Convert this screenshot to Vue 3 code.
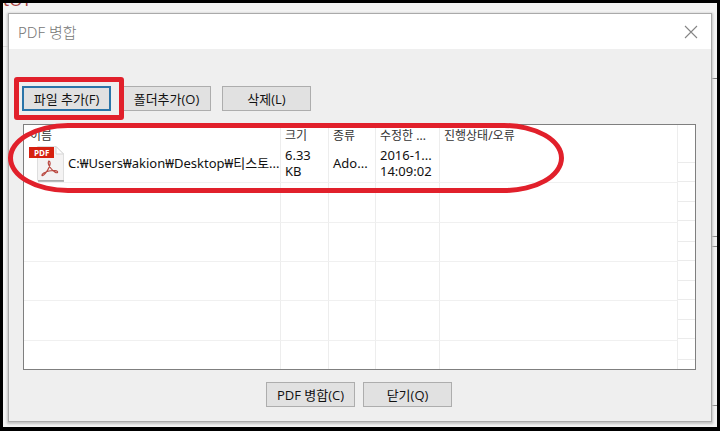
<template>
	<main class="screen">
		<div class="backdrop-text" aria-hidden="true">tOT</div>

		<section class="dialog" aria-labelledby="dialog-title">
			<header class="titlebar">
				<h1 id="dialog-title">PDF 병합</h1>
				<button class="btn-close" type="button" aria-label="닫기">
					<svg viewBox="0 0 14 14" width="14" height="14">
						<path d="M1 1L13 13M13 1L1 13" fill="none" stroke="#858585" stroke-width="1.1" />
					</svg>
				</button>
			</header>

			<div class="content">
				<div class="toolbar">
					<div class="marked">
						<button class="btn focused" type="button">파일 추가(F)</button>
						<span class="mark-box"></span>
					</div>
					<button class="btn" type="button">폴더추가(O)</button>
					<button class="btn" type="button">삭제(L)</button>
				</div>

				<div class="list">
					<table>
						<colgroup>
							<col class="col-name">
							<col class="col-size">
							<col class="col-type">
							<col class="col-date">
							<col>
							<col class="col-rest">
						</colgroup>
						<thead>
							<tr>
								<th v-for="column in columns" :key="column">{{ column }}</th>
								<td></td>
							</tr>
						</thead>
						<tbody>
							<tr v-for="file in files" :key="file.path">
								<td class="cell-name">
									<div class="file">
										<svg class="pdf-icon" viewBox="0 0 36 37" width="36" height="37">
											<path d="M8.5 1.5H27L34.5 9V35.5H8.5Z" fill="#f4f3f3" stroke="#dedede" />
											<path d="M27 1.5V9H34.5Z" fill="#fff" stroke="#d5d5d5" />
											<path d="M9 36H35" stroke="#777b7b" />
											<path d="M0 2H25V13H0Z" fill="#d6200f" />
											<text x="5" y="11" class="pdf-label">PDF</text>
											<path d="M20 16C18.500 17.500 20 21 22 23.500C24.500 26.500 27.500 28.500 28.500 27.500C29.500 25.500 24 25 20 26C16 27 12.500 29 13 30.500C14.500 31.500 18.500 26 20 22.500C21.500 19 21.500 16.500 20 16Z" fill="none" stroke="#b9473f" stroke-width="1.2" />
										</svg>
										<span>{{ file.path }}</span>
									</div>
								</td>
								<td>{{ file.size }}</td>
								<td>{{ file.type }}</td>
								<td>{{ file.date }}<br>{{ file.time }}</td>
								<td></td>
								<td></td>
							</tr>
							<tr v-for="row in 5" :key="row" class="empty">
								<td v-for="cell in 6" :key="cell"></td>
							</tr>
						</tbody>
					</table>
					<span class="mark-oval"></span>
				</div>

				<footer class="actions">
					<button class="btn" type="button">PDF 병합(C)</button>
					<button class="btn" type="button">닫기(Q)</button>
				</footer>
			</div>
		</section>
	</main>
</template>

<script setup>
import { ref } from 'vue'

const columns = ['이름', '크기', '종류', '수정한 ...', '진행상태/오류']

const files = ref([
	{
		path: 'C:₩Users₩akion₩Desktop₩티스토...',
		size: '6.33 KB',
		type: 'Ado...',
		date: '2016-1...',
		time: '14:09:02'
	}
])
</script>

<style>
body {
	margin: 0;
}
</style>

<style scoped>

.screen {
	box-sizing: border-box;
	min-height: 100vh;
	display: flex;
	flex-direction: column;
	position: relative;
	padding: 10px 5px 5px;
	border: 3px solid black;
	border-bottom-width: 4px;
	background:
		linear-gradient(#777, #777) right 75px / 6px 1px no-repeat,
		linear-gradient(#888, #888) right 233px / 6px 1px no-repeat,
		linear-gradient(#888, #888) right 243px / 6px 1px no-repeat,
		linear-gradient(#888, #888) right 402px / 6px 1px no-repeat,
		linear-gradient(#ddd, #ddd) left 43px / 5px 1px no-repeat,
		#f3f3f3;
	font-family: 'Noto Sans', 'Noto Sans CJK KR', sans-serif;
	color: #111;
}

.backdrop-text {
	position: absolute;
	top: 0;
	left: 0;
	height: 4px;
	overflow: hidden;
	display: flex;
	align-items: flex-end;
	font-size: 17px;
	line-height: 14px;
	color: #a5433f;
}

.dialog {
	flex: 1;
	display: flex;
	flex-direction: column;
	border: 1px solid #aaa;
	background-color: #efefef;
	box-shadow: 0 1px 2px 1px #c4c4c4;
}

.titlebar {
	height: 35px;
	display: flex;
	align-items: center;
	justify-content: space-between;
	padding: 0 13px 0 9px;
	background-color: white;
}

.titlebar h1 {
	margin: 0;
	font-size: 15px;
	font-weight: 300;
	color: #777;
}

.btn-close {
	display: flex;
	padding: 0;
	border: none;
	background-color: transparent;
	cursor: pointer;
}

.content {
	flex: 1;
	display: flex;
	flex-direction: column;
	padding: 37px 15px 14px 13px;
}

.toolbar {
	display: flex;
	gap: 11px;
	margin-bottom: 13px;
}

.marked {
	position: relative;
	display: flex;
}

.btn {
	box-sizing: border-box;
	width: 89px;
	height: 25px;
	padding: 0;
	border: 1px solid #adadad;
	background-color: #e1e1e1;
	font-family: 'Open Sans', 'Noto Sans CJK KR', sans-serif;
	font-size: 13px;
	line-height: 16px;
	color: #111;
	white-space: nowrap;
	cursor: pointer;
}

.btn.focused {
	border: 2px solid #2a74a8;
}

.btn:hover {
	background-color: #e5f1fb;
}

.mark-box {
	position: absolute;
	inset: -9px -13px -9px -8px;
	border: 5px solid #e1202b;
	border-radius: 3px;
	pointer-events: none;
}

.list {
	flex: 1;
	position: relative;
	display: flex;
	margin-left: 1px;
	border: 1px solid #7f7f7f;
	background-color: white;
}

.mark-oval {
	position: absolute;
	top: -2px;
	left: -16px;
	box-sizing: border-box;
	width: 556px;
	height: 70px;
	border: 5px solid #e1202b;
	border-radius: 60px / 35px;
	pointer-events: none;
}

table {
	width: 100%;
	table-layout: fixed;
	border-collapse: separate;
	border-spacing: 0;
}

.col-name {
	width: 257px;
}

.col-size {
	width: 48px;
}

.col-type {
	width: 47px;
}

.col-date {
	width: 64px;
}

.col-rest {
	width: 17px;
}

th,
td {
	box-sizing: border-box;
	padding: 0 0 0 4px;
	border-right: 1px solid #ededed;
	text-align: left;
	white-space: nowrap;
}

th {
	height: 19px;
	padding-top: 2px;
	font-size: 12px;
	line-height: 17px;
	font-weight: 400;
	color: #333;
}

th:first-child {
	padding-left: 6px;
}

td {
	height: 39px;
	border-bottom: 1px solid #f0f0f0;
	font-size: 13px;
	line-height: 16px;
}

thead td {
	height: 19px;
	border-bottom: none;
}

tbody td:nth-child(2) {
	white-space: normal;
}

td:last-child {
	border-right: none;
}

tbody td:last-child {
	border-bottom: none;
	background: linear-gradient(#ebebeb, #ebebeb) 0 18px / 100% 1px no-repeat, linear-gradient(#ebebeb, #ebebeb) 0 37px / 100% 1px no-repeat;
}

.empty:last-child td {
	height: 28px;
	border-bottom: none;
}

.cell-name {
	padding-left: 5px;
}

.file {
	display: flex;
	align-items: center;
	gap: 3px;
}

.pdf-icon {
	flex: none;
}

.pdf-label {
	font-family: 'Open Sans', sans-serif;
	font-size: 8px;
	font-weight: 700;
	fill: white;
}

.actions {
	display: flex;
	justify-content: center;
	gap: 8px;
	margin-top: 12px;
}

</style>
